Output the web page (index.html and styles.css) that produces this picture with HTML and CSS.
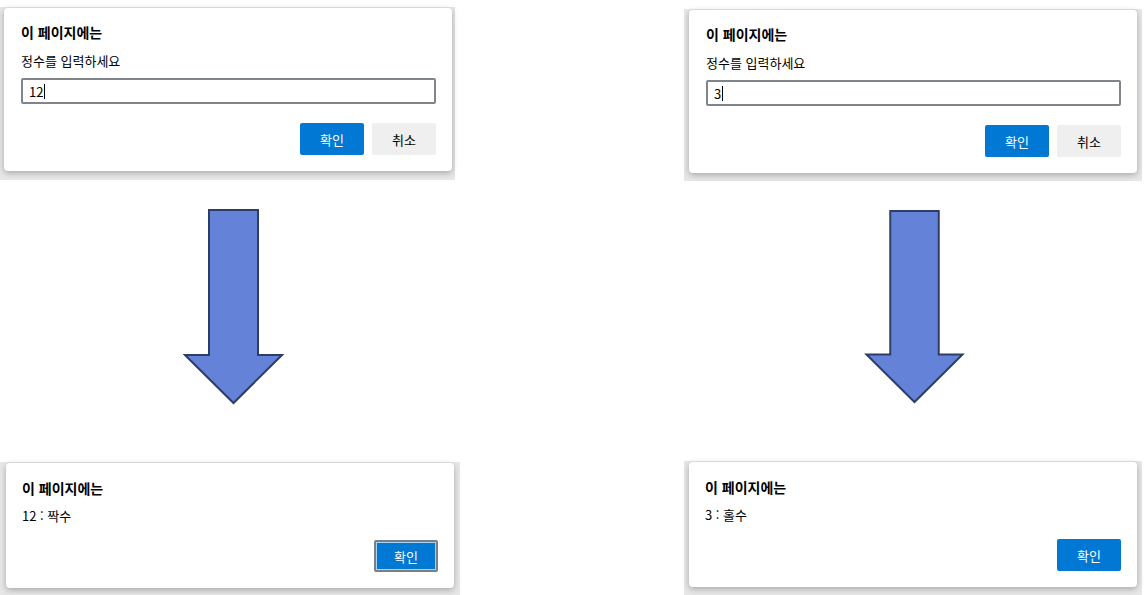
FILE: index.html
```html
<!DOCTYPE html>
<html lang="ko">
<head>
<meta charset="utf-8">
<title>prompt</title>
<link rel="stylesheet" href="styles.css">
</head>
<body>
<div class="board">
  <div class="col col-left">
    <div class="shot shot-top-left">
      <div class="dialog dialog-prompt">
        <div class="title">이 페이지에는</div>
        <div class="msg msg-prompt">정수를 입력하세요</div>
        <div class="field"><span class="value">12</span><span class="caret"></span></div>
        <div class="actions actions-prompt">
          <button class="btn btn-primary">확인</button>
          <button class="btn btn-secondary">취소</button>
        </div>
      </div>
    </div>
    <svg class="arrow arrow-left" width="101" height="197" viewBox="0 0 101 197">
      <path d="M26 2 H75 V147 H99 L50.5 195 L2 147 H26 Z" fill="#6483d8" stroke="#2e3d66" stroke-width="2" stroke-linejoin="miter"/>
    </svg>
    <div class="shot shot-bottom-left">
      <div class="dialog dialog-alert">
        <div class="title">이 페이지에는</div>
        <div class="msg msg-alert">12 : 짝수</div>
        <div class="actions actions-alert">
          <button class="btn btn-primary btn-focus">확인</button>
        </div>
      </div>
    </div>
  </div>
  <div class="col col-right">
    <div class="shot shot-top-right">
      <div class="dialog dialog-prompt">
        <div class="title">이 페이지에는</div>
        <div class="msg msg-prompt">정수를 입력하세요</div>
        <div class="field"><span class="value">3</span><span class="caret"></span></div>
        <div class="actions actions-prompt">
          <button class="btn btn-primary">확인</button>
          <button class="btn btn-secondary">취소</button>
        </div>
      </div>
    </div>
    <svg class="arrow arrow-right" width="101" height="197" viewBox="0 0 101 197">
      <path d="M26 2 H75 V147 H99 L50.5 195 L2 147 H26 Z" fill="#6483d8" stroke="#2e3d66" stroke-width="2" stroke-linejoin="miter"/>
    </svg>
    <div class="shot shot-bottom-right">
      <div class="dialog dialog-alert">
        <div class="title">이 페이지에는</div>
        <div class="msg msg-alert">3 : 홀수</div>
        <div class="actions actions-alert">
          <button class="btn btn-primary">확인</button>
        </div>
      </div>
    </div>
  </div>
</div>
</body>
</html>
```
FILE: styles.css
```css
html, body {
  margin: 0;
  padding: 0;
  background: #ffffff;
}

body {
  width: 1144px;
  height: 595px;
  overflow: hidden;
  font-family: "Noto Sans CJK KR", "Noto Sans", sans-serif;
  color: #000;
}

.board {
  display: flex;
  justify-content: space-between;
  width: 1144px;
  height: 595px;
}

.col {
  display: flex;
  flex-direction: column;
  align-items: flex-start;
  width: 460px;
}

.col-right {
  margin-left: 0;
}

/* screenshot crops */
.shot {
  background: #e7e7e7;
  box-sizing: border-box;
  display: flex;
}

.shot-top-left {
  margin-top: 7px;
  width: 455px;
  padding: 1px 3px 9px 4px;
}

.shot-top-right {
  margin-top: 9px;
  width: 458px;
  padding: 1px 5px 8px 5px;
}

.shot-bottom-left {
  margin-top: 57px;
  width: 460px;
  padding: 1px 6px 7px 6px;
}

.shot-bottom-right {
  margin-top: 57px;
  width: 458px;
  padding: 1px 5px 8px 5px;
}

.dialog {
  flex: 1;
  background: #ffffff;
  border-radius: 4px;
  box-shadow: 0 2px 6px rgba(0, 0, 0, 0.28);
  display: flex;
  flex-direction: column;
}

.dialog-prompt {
  padding: 14px 16px 16px 17px;
}

.dialog-alert {
  padding: 15px 16px 16px 16px;
}

.title {
  font-size: 14px;
  font-weight: 700;
  line-height: 20px;
}

.msg {
  font-size: 13px;
  line-height: 20px;
}

.msg-prompt {
  margin-top: 9px;
}

.msg-alert {
  margin-top: 8px;
}

.field {
  margin-top: 7px;
  height: 26px;
  box-sizing: border-box;
  border: 2px solid #80858b;
  border-radius: 2px;
  display: flex;
  align-items: center;
  padding-left: 6px;
  font-size: 13px;
}

.caret {
  display: inline-block;
  width: 1px;
  height: 15px;
  background: #000;
  margin-left: 1px;
}

.actions {
  display: flex;
  justify-content: flex-end;
  gap: 8px;
}

.actions-prompt {
  margin-top: 19px;
}

.actions-alert {
  margin-top: 14px;
}

.btn {
  width: 64px;
  height: 32px;
  border: none;
  border-radius: 2px;
  font-family: "Noto Sans CJK KR", "Noto Sans", sans-serif;
  font-size: 13px;
  padding: 0;
  cursor: default;
}

.btn-primary {
  background: #0078d4;
  color: #ffffff;
}

.btn-secondary {
  background: #efefef;
  color: #000;
}

.btn-focus {
  border: 2px solid #7a7f85;
  box-shadow: inset 0 0 0 1px #a9d3f5;
  border-radius: 2px;
}

.arrow {
  display: block;
  margin-top: 28px;
}

.arrow-left {
  margin-left: 183px;
}

.arrow-right {
  margin-left: 180px;
  margin-top: 28px;
}
```
